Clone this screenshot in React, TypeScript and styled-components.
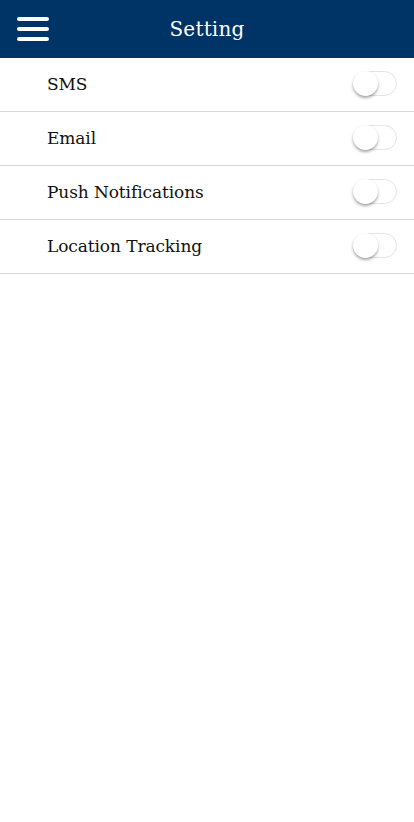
import React, { useState } from "react";
import styled, { createGlobalStyle } from "styled-components";

const Global = createGlobalStyle`
  html, body { margin: 0; padding: 0; background: #fff; }
  body { font-family: "DejaVu Serif", "Liberation Serif", serif; }
  * { box-sizing: border-box; }
`;

const Page = styled.div`
  width: 414px;
  min-height: 822px;
  background: #fff;
`;

const Header = styled.header`
  height: 58px;
  background: #003366;
  display: grid;
  grid-template-columns: 66px 1fr 66px;
  align-items: center;
`;

const MenuButton = styled.button`
  width: 32px;
  height: 24px;
  margin-left: 17px;
  padding: 0;
  border: 0;
  background: transparent;
  display: flex;
  flex-direction: column;
  justify-content: space-between;
  cursor: pointer;
`;

const Bar = styled.span`
  display: block;
  height: 4px;
  border-radius: 2px;
  background: #fff;
`;

const Title = styled.h1`
  margin: 0;
  text-align: center;
  color: #fff;
  font-weight: 400;
  font-size: 20px;
  letter-spacing: 0.2px;
`;

const List = styled.ul`
  list-style: none;
  margin: 0;
  padding: 0;
`;

const Row = styled.li`
  height: 54px;
  display: flex;
  align-items: center;
  justify-content: space-between;
  padding: 0 17px 2px 47px;
  border-bottom: 1px solid #d6d6d6;
`;

const Label = styled.span`
  font-size: 17px;
  letter-spacing: -0.1px;
  color: #111;
`;

const Track = styled.button<{ $on: boolean }>`
  position: relative;
  width: 44px;
  height: 25px;
  padding: 0;
  border-radius: 13px;
  border: 1px solid #e4e4e4;
  background: ${(p) => (p.$on ? "#4cd964" : "#fff")};
  cursor: pointer;
`;

const Knob = styled.span<{ $on: boolean }>`
  position: absolute;
  top: -1px;
  left: ${(p) => (p.$on ? "19px" : "-1px")};
  width: 25px;
  height: 25px;
  border-radius: 50%;
  background: #fff;
  box-shadow: 0 2px 3px rgba(0, 0, 0, 0.35);
  transition: left 0.2s;
`;

const items = ["SMS", "Email", "Push Notifications", "Location Tracking"];

export default function App() {
  const [state, setState] = useState<boolean[]>(items.map(() => false));
  return (
    <Page>
      <Global />
      <Header>
        <MenuButton aria-label="menu">
          <Bar />
          <Bar />
          <Bar />
        </MenuButton>
        <Title>Setting</Title>
        <span />
      </Header>
      <List>
        {items.map((it, i) => (
          <Row key={it}>
            <Label>{it}</Label>
            <Track
              $on={state[i]}
              onClick={() =>
                setState((s) => s.map((v, j) => (j === i ? !v : v)))
              }
            >
              <Knob $on={state[i]} />
            </Track>
          </Row>
        ))}
      </List>
    </Page>
  );
}
